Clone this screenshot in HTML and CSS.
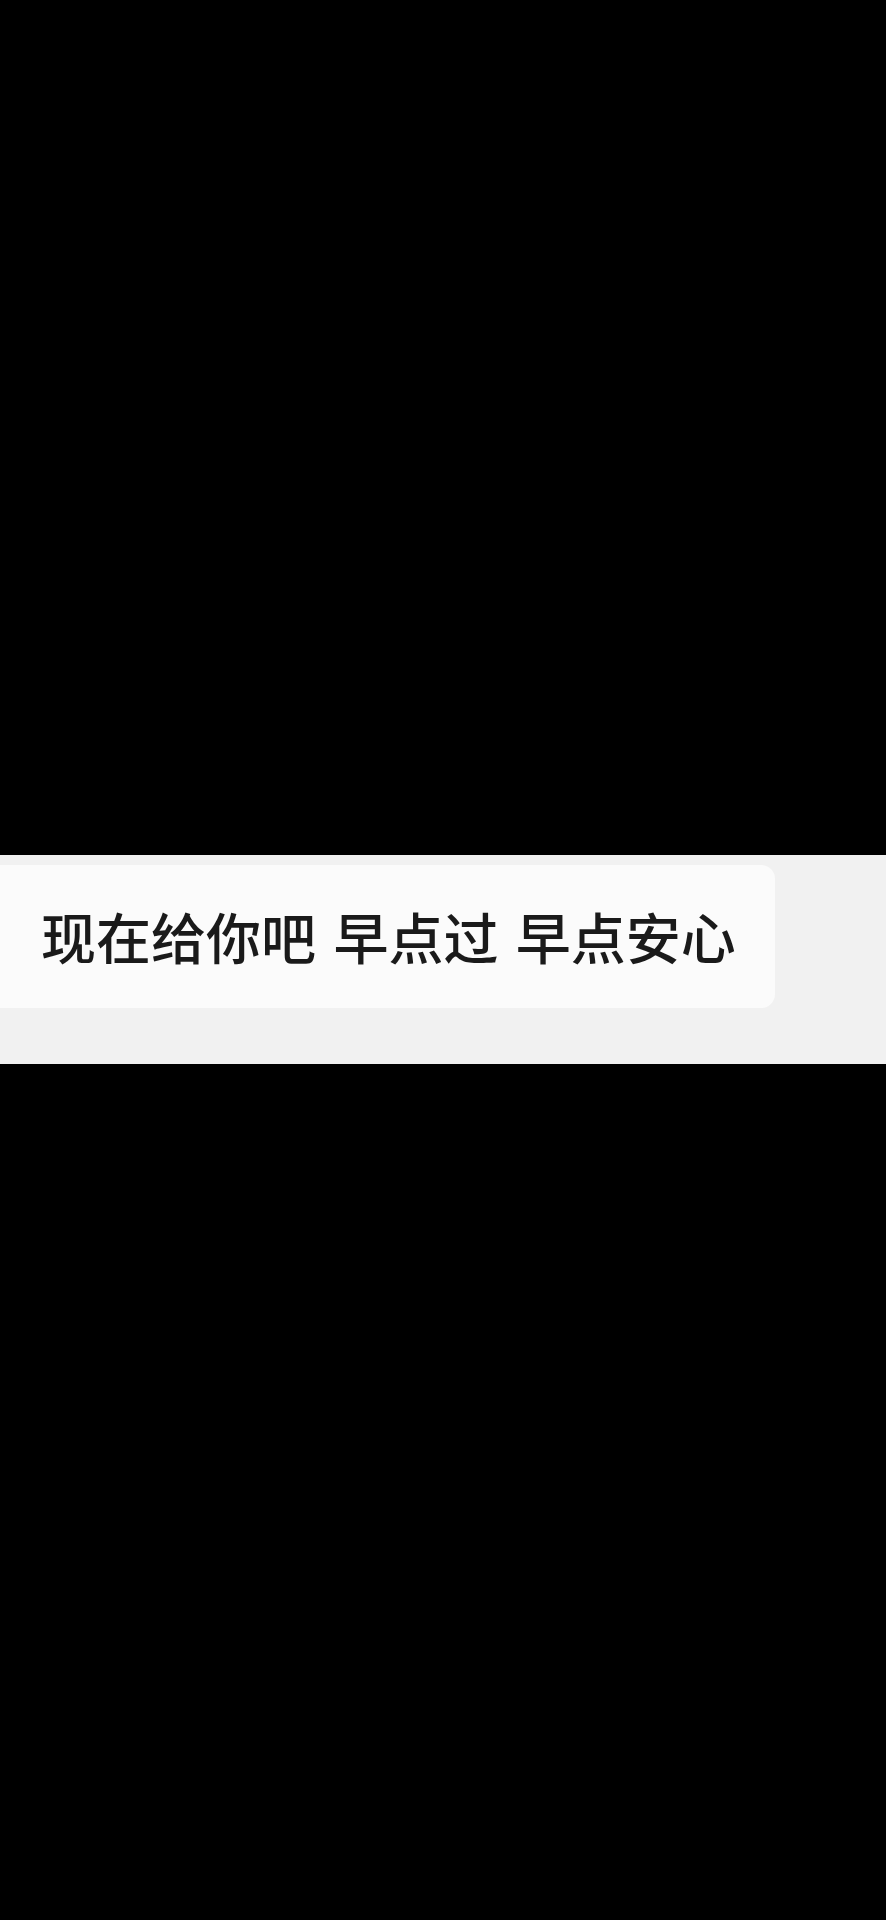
FILE: index.html
```html
<!DOCTYPE html>
<html lang="zh-CN">
<head>
<meta charset="utf-8">
<title>聊天</title>
<link rel="stylesheet" href="styles.css">
</head>
<body>
<div class="screen">
  <div class="top-dark"></div>
  <div class="chat-band">
    <div class="bubble">
      <span class="msg">现在给你吧 早点过 早点安心</span>
    </div>
  </div>
  <div class="bottom-dark"></div>
</div>
</body>
</html>
```
FILE: styles.css
```css
html, body {
  margin: 0;
  padding: 0;
  background: #000;
}
.screen {
  width: 886px;
  height: 1920px;
  display: flex;
  flex-direction: column;
  background: #000;
}
.top-dark {
  height: 855px;
  flex: none;
}
.chat-band {
  height: 209px;
  flex: none;
  background: #f1f1f1;
  padding-top: 10px;
  box-sizing: border-box;
}
.bubble {
  width: 775px;
  height: 143px;
  box-sizing: border-box;
  background: #fbfbfb;
  border-radius: 0 14px 14px 0;
  display: flex;
  align-items: center;
  padding-left: 41px;
  padding-bottom: 2px;
}
.msg {
  font-family: "Noto Sans CJK SC", "Noto Sans", sans-serif;
  font-size: 55px;
  font-weight: 500;
  line-height: 1;
  color: #1a1a1a;
  white-space: pre;
  word-spacing: 5px;
}
.bottom-dark {
  flex: 1;
}
```
